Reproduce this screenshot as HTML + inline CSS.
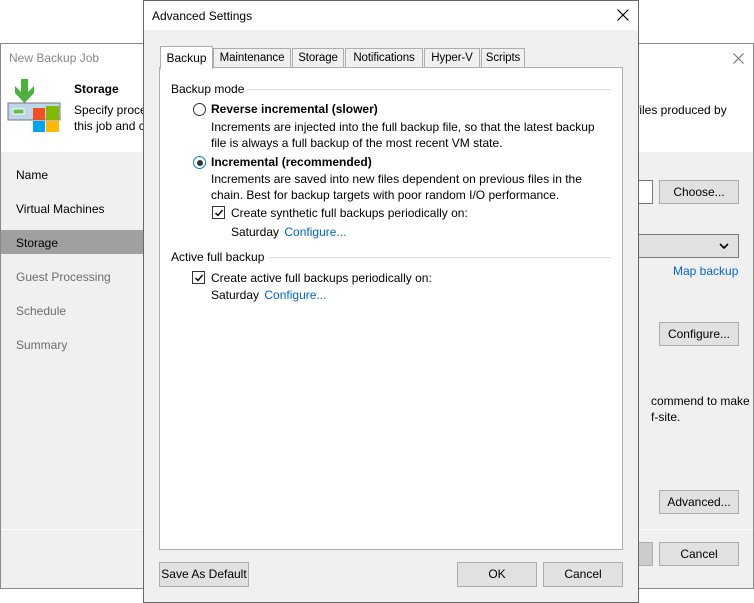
<!DOCTYPE html><html><head><style>
*{margin:0;padding:0;box-sizing:border-box}
body{width:754px;height:603px;background:#fff;position:relative;overflow:hidden;font-family:"Liberation Sans",sans-serif;font-size:12px;color:#000}
.a{position:absolute;white-space:nowrap}
.btn{position:absolute;background:#e1e1e1;border:1px solid #adadad;text-align:center;line-height:22px;font-size:12px}
.link{color:#0066cc}
.gray{color:#6d6d6d}
.tab{position:absolute;background:#f0f0f0;border:1px solid #adadad;text-align:center;line-height:18px;font-size:11.5px;letter-spacing:-0.1px}
</style></head><body>
<!-- back window -->
<div class="a" style="left:0;top:43px;width:754px;height:546px;border:1px solid #888;background:#f0f0f0"></div>
<div class="a" style="left:1px;top:44px;width:752px;height:108px;background:#fff"></div>
<div class="a gray" style="left:9px;top:51px;color:#888">New Backup Job</div>
<svg class="a" style="left:733px;top:53px" width="11" height="11"><path d="M0.5 0.5 L10.5 10.5 M10.5 0.5 L0.5 10.5" stroke="#777" stroke-width="1.2"/></svg>
<svg class="a" style="left:7px;top:79px" width="54" height="54" viewBox="0 0 54 54">
<rect x="1" y="24" width="52" height="17" fill="#bcd6ec" stroke="#777" stroke-width="1"/>
<rect x="6" y="30" width="11" height="5" fill="#66bb44" stroke="#fff"/>
<polygon points="14,0 21,0 21,13 27,7 27,14 17.5,24 8,14 8,7 14,13" fill="#4caf3e"/>
<rect x="26" y="29" width="12" height="12" fill="#f25022"/><rect x="39" y="27" width="13" height="14" fill="#7fba00"/>
<rect x="26" y="42" width="12" height="11" fill="#00a4ef"/><rect x="39" y="42" width="13" height="11" fill="#ffb900"/>
</svg>
<div class="a" style="left:74px;top:82px;font-weight:bold">Storage</div>
<div class="a" style="left:74px;top:103px">Specify proce</div>
<div class="a" style="left:74px;top:119px">this job and c</div>
<div class="a" style="left:636px;top:103px">files produced by</div>
<div class="a" style="left:16px;top:168px">Name</div>
<div class="a" style="left:16px;top:202px">Virtual Machines</div>
<div class="a" style="left:1px;top:230px;width:143px;height:24px;background:#a0a0a0"></div>
<div class="a" style="left:16px;top:236px">Storage</div>
<div class="a gray" style="left:16px;top:270px">Guest Processing</div>
<div class="a gray" style="left:16px;top:304px">Schedule</div>
<div class="a gray" style="left:16px;top:338px">Summary</div>
<div class="a" style="left:1px;top:529px;width:752px;height:1px;background:#fff"></div>
<div class="a" style="left:637px;top:180px;width:16px;height:24px;background:#fff;border:1px solid #7a7a7a;border-left:none"></div>
<div class="btn" style="left:659px;top:180px;width:80px;height:24px">Choose...</div>
<div class="a" style="left:637px;top:234px;width:102px;height:24px;background:#e1e1e1;border:1px solid #7a7a7a;border-left:none"></div>
<svg class="a" style="left:719px;top:242px" width="10" height="8"><path d="M1 2 L5 6 L9 2" stroke="#000" stroke-width="1.6" fill="none"/></svg>
<div class="a link" style="left:673px;top:264px">Map backup</div>
<div class="btn" style="left:659px;top:322px;width:80px;height:24px">Configure...</div>
<div class="a" style="left:651px;top:394px">commend to make</div>
<div class="a" style="left:651px;top:410px">f-site.</div>
<div class="btn" style="left:659px;top:490px;width:80px;height:24px">Advanced...</div>
<div class="a" style="left:637px;top:542px;width:16px;height:24px;background:#ccc;border:1px solid #adadad;border-left:none"></div>
<div class="btn" style="left:659px;top:542px;width:80px;height:24px">Cancel</div>
<!-- dialog -->
<div class="a" style="left:143px;top:0;width:496px;height:603px;border:1px solid #666;background:#f0f0f0"></div>
<div class="a" style="left:144px;top:1px;width:494px;height:29px;background:#fff"></div>
<div class="a" style="left:152px;top:9px">Advanced Settings</div>
<svg class="a" style="left:617px;top:9px" width="12" height="12"><path d="M0.5 0.5 L11.5 11.5 M11.5 0.5 L0.5 11.5" stroke="#000" stroke-width="1.2"/></svg>
<div class="a" style="left:159px;top:67px;width:464px;height:483px;background:#fff;border:1px solid #adadad"></div>
<div class="tab" style="left:213px;top:48px;width:78px;height:20px">Maintenance</div>
<div class="tab" style="left:292px;top:48px;width:52px;height:20px">Storage</div>
<div class="tab" style="left:345px;top:48px;width:78px;height:20px">Notifications</div>
<div class="tab" style="left:424px;top:48px;width:56px;height:20px">Hyper-V</div>
<div class="tab" style="left:481px;top:48px;width:44px;height:20px">Scripts</div>
<div class="a" style="left:160px;top:46px;width:53px;height:23px;background:#fff;border:1px solid #adadad;border-bottom:none;text-align:center;line-height:22px">Backup</div>
<div class="a" style="left:171px;top:82px">Backup mode</div>
<div class="a" style="left:247px;top:89px;width:364px;height:1px;background:#dcdcdc"></div>
<div class="a" style="left:193px;top:103px;width:13px;height:13px;border:1px solid #333;border-radius:50%"></div>
<div class="a" style="left:211px;top:102px;font-weight:bold">Reverse incremental (slower)</div>
<div class="a" style="left:211px;top:120px">Increments are injected into the full backup file, so that the latest backup</div>
<div class="a" style="left:211px;top:136px">file is always a full backup of the most recent VM state.</div>
<div class="a" style="left:193px;top:156px;width:13px;height:13px;border:1px solid #0078d7;border-radius:50%"></div>
<div class="a" style="left:196.5px;top:159.5px;width:6px;height:6px;background:#333;border-radius:50%"></div>
<div class="a" style="left:211px;top:155px;font-weight:bold">Incremental (recommended)</div>
<div class="a" style="left:211px;top:172px">Increments are saved into new files dependent on previous files in the</div>
<div class="a" style="left:211px;top:188px">chain. Best for backup targets with poor random I/O performance.</div>
<div class="a" style="left:212px;top:206px;width:13px;height:13px;border:1px solid #333;background:#fff"></div>
<svg class="a" style="left:214px;top:208px" width="10" height="10"><path d="M1.5 5 L4 7.5 L8.5 2" stroke="#000" stroke-width="1.4" fill="none"/></svg>
<div class="a" style="left:231px;top:206px">Create synthetic full backups periodically on:</div>
<div class="a" style="left:231px;top:225px">Saturday <span class="link" style="margin-left:2px">Configure...</span></div>
<div class="a" style="left:171px;top:250px">Active full backup</div>
<div class="a" style="left:269px;top:257px;width:342px;height:1px;background:#dcdcdc"></div>
<div class="a" style="left:192px;top:271px;width:13px;height:13px;border:1px solid #333;background:#fff"></div>
<svg class="a" style="left:194px;top:273px" width="10" height="10"><path d="M1.5 5 L4 7.5 L8.5 2" stroke="#000" stroke-width="1.4" fill="none"/></svg>
<div class="a" style="left:211px;top:271px">Create active full backups periodically on:</div>
<div class="a" style="left:211px;top:288px">Saturday <span class="link" style="margin-left:2px">Configure...</span></div>
<div class="btn" style="left:159px;top:562px;width:90px;height:25px">Save As Default</div>
<div class="btn" style="left:457px;top:562px;width:80px;height:25px">OK</div>
<div class="btn" style="left:543px;top:562px;width:80px;height:25px">Cancel</div>
</body></html>
